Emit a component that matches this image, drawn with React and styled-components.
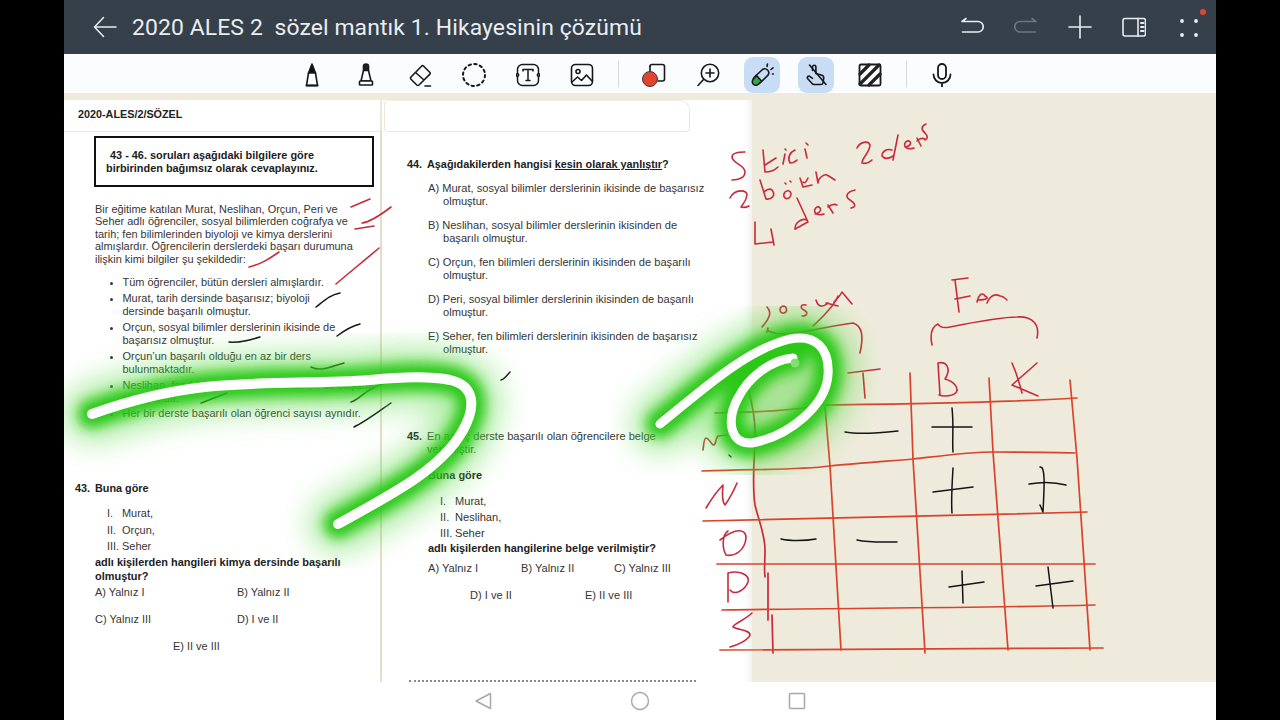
import React from "react";
import styled, { createGlobalStyle } from "styled-components";

const Global = createGlobalStyle`
  html, body { margin: 0; padding: 0; background: #000; }
  #root { width: 1280px; height: 720px; overflow: hidden; }
`;

const Screen = styled.div`
  width: 1152px; height: 720px; margin: 0 auto; display: flex; flex-direction: column;
  background: #fff; font-family: "Liberation Sans", Arial, sans-serif;
`;
const Header = styled.header`
  height: 54px; flex: none; background: #36404a; display: flex; align-items: center; padding: 0 16px 0 29px; position: relative;
`;
const Title = styled.h1`
  margin: 0 0 0 15px; flex: 1; font: 400 22.9px Roboto, sans-serif; color: #e9eef3; white-space: pre; letter-spacing: .12px;
`;
const HeadIcons = styled.div` display: flex; gap: 30px; `;
const HeadDot = styled.span`
  position: absolute; left: 1136px; top: 9px; width: 6px; height: 6px; border-radius: 50%; background: #e2452f;
`;
const Toolbar = styled.nav`
  height: 40px; flex: none; background: #fbfcfe; display: flex; align-items: center; padding-left: 230px; gap: 18px;
  border-bottom: 1px solid #ecebe4; box-sizing: border-box;
`;
const Tool = styled.span`
  width: 36px; height: 36px; flex: none; display: flex; align-items: center; justify-content: center; border-radius: 9px; margin-top: 3px;
  background: ${p => (p.$on ? "#c9dcf5" : "transparent")};
`;
const Sep = styled.span` width: 1px; height: 26px; background: #d4d6d8; margin: 0 -1px 0 0; flex: none; `;
const Canvas = styled.main`
  flex: 1; background: #efebdc; position: relative; overflow: hidden; display: flex;
`;
const Page = styled.div`
  width: 688px; height: 100%; display: grid; grid-template-columns: 318px 370px; padding-top: 6px; box-sizing: border-box;
  color: #353535; font-size: 10.95px; line-height: 12.6px; white-space: nowrap;
  background: linear-gradient(#efebdc 6px, #fff 6px);
  box-shadow: inset -10px 0 8px -8px #ececec;
`;
const Col = styled.section`
  min-width: 0; position: relative;
  ${p => p.$left && "border-right: 2px solid #e6dccb;"}
  ${p => p.$right && "font-size: 11.1px;"}
`;
const Tab = styled.div`
  height: 32px; box-sizing: border-box; display: flex; align-items: center; padding: 0 0 2px 14px;
  background: #fff; border: 1px solid #eee7d8; border-top: none; border-left: none;
  font-weight: 700; color: #222; font-size: 10.8px; border-radius: 10px 0 4px 0;
  ${p => p.$right && "margin: 0 62px 0 2px; border-left: 1px solid #eee7d8; border-top: 1px solid #f3eee2; border-radius: 4px 10px 4px 4px;"}
  ${p => p.$left && "margin-right: -2px; border-right: 2px solid #eee7d8; position: relative; z-index: 1;"}
`;
const NoticeBox = styled.div`
  margin: 4px 0 0 30px; width: 280px; height: 51px; box-sizing: border-box; border: 2px solid #111; padding: 11px 0 0 10px;
  font-weight: 700; color: #1c1c1c; font-size: 10.9px; line-height: 13px;
  span { display: block; }
  span:first-child { padding-left: 4px; }
`;
const Para = styled.p` margin: 16px 0 0 31px; line-height: 12.45px; `;
const Bullets = styled.ul`
  margin: 11px 0 0 0; padding: 0 0 0 58.5px; display: flex; flex-direction: column; gap: 3px; line-height: 12.9px;
  li { padding: 0; }
`;
const QHead = styled.div`
  display: grid; grid-template-columns: 20px auto; justify-content: start; font-weight: 700; color: #222; font-size: 10.85px;
  margin: ${p => p.$mt}px 0 0 ${p => p.$ml}px; line-height: 13px;
  u { text-decoration: underline; }
`;
const QBody = styled.span` font-weight: 400; color: #353535; font-size: 11.1px; `;
const Roman = styled.ol`
  list-style: none; margin: ${p => p.$mt}px 0 0 ${p => p.$ml}px; padding: 0; display: flex; flex-direction: column; gap: 3.6px;
  li { display: grid; grid-template-columns: 15px auto; }
`;
const Ask = styled.div`
  margin: ${p => p.$mt ?? 4}px 0 0 ${p => p.$ml}px; font-weight: 700; color: #222; line-height: 13.6px; font-size: 10.95px;
`;
const Answers = styled.div`
  display: grid; grid-template-columns: repeat(${p => p.$cols}, ${p => p.$step}px); row-gap: ${p => p.$gap}px;
  margin: ${p => p.$mt}px 0 0 ${p => p.$ml}px;
`;
const CentreAnswer = styled.span` grid-column: 1 / -1; padding-left: ${p => p.$pl}px; display: flex; gap: ${p => p.$gap || 0}px; `;
const Options = styled.div`
  margin: 11px 0 0 46px; display: flex; flex-direction: column; gap: 11.9px; line-height: 12.6px;
`;
const Option = styled.div` padding-left: 15px; text-indent: -15px; `;
const CutLine = styled.div`
  position: absolute; left: 27px; right: 56px; bottom: 0; height: 0; border-top: 2px dotted #8a8a8a;
`;
const Ink = styled.svg`
  position: absolute; inset: 0; width: 100%; height: 100%; pointer-events: none;
`;
const BottomNav = styled.footer`
  height: 38px; flex: none; background: #fff; display: grid; grid-template-columns: 157px 157px 157px; justify-content: center; justify-items: center; align-items: center;
`;

const Ic = ({ c = "#16181a", w = 24, h = 24, sw = 1.7, children }) => (
  <svg width={w} height={h} viewBox={`0 0 ${w} ${h}`} fill="none" stroke={c} strokeWidth={sw} strokeLinecap="round" strokeLinejoin="round">{children}</svg>
);

const HW = "#e8edf2";
const Back = () => <Ic c={HW} sw={1.5}><path d="M23 12H1.500M10.500 2.500 1.500 12l9 9.500" /></Ic>;
const Undo = () => <Ic c={HW} sw={1.6}><path d="M2 6.500h16a4.500 4.500 0 0 1 0 10.500H2.500M2 6.500 6 3.500" /></Ic>;
const Redo = () => <Ic c="#6e767e" sw={1.6}><path d="M22 6.500H6a4.500 4.500 0 0 0 0 10.500h15.500M22 6.500 18 3.500" /></Ic>;
const Plus = () => <Ic c={HW} sw={1.6}><path d="M12 1v22M1 12h22" /></Ic>;
const Panel = () => <Ic c={HW} sw={1.6}><rect x="1" y="3.500" width="22.500" height="17.500" rx="2" /><path d="M16 3.500V21" /><path d="M19 8h2.500M19 12h2.500M19 16h2.500" strokeWidth="2" /></Ic>;
const Dots = () => <Ic c={HW} sw={0}><g fill={HW}><circle cx="6" cy="6" r="1.900" /><circle cx="20" cy="6" r="1.900" /><circle cx="6" cy="20" r="1.900" /><circle cx="20" cy="20" r="1.900" /></g></Ic>;

const Pen = () => <Ic sw={1.6}><path d="M12 1 8.500 10h7Z" fill="#111" /><path d="M8.500 10 6.500 22.500h11L15.500 10Z" fill="#fff" /><path d="M6.500 22.500h11" strokeWidth="2" /></Ic>;
const Marker = () => <Ic sw={1.6}><path d="M9.500 7.500V3.500a2.500 2.500 0 0 1 5 0v4Z" fill="#222" /><path d="M9.500 7.500 7 18h10L14.500 7.500Z" fill="#fff" /><rect x="5.500" y="18" width="13" height="4" rx=".8" fill="#fff" /></Ic>;
const Eraser = () => <Ic sw={1.6}><path d="M3 14 13.500 3.200a1.600 1.600 0 0 1 2.200 0l6 6a1.600 1.600 0 0 1 0 2.200L11 22a1.600 1.600 0 0 1-2.200 0l-5.800-5.800a1.600 1.600 0 0 1 0-2.200ZM7.500 9.500l8.500 7.500" /><path d="M17 23h5.500" /></Ic>;
const Lasso = () => <Ic sw={2}><circle cx="12" cy="12" r="11" strokeDasharray="2.400 3.350" /></Ic>;
const TextTool = () => <Ic sw={1.5}><rect x="1.500" y="1.500" width="21" height="21" rx="5" /><path d="M7 8V6.500h10V8M12 6.500v11M10 17.500h4" /><circle cx="1.500" cy="12" r="1.200" fill="#fff" /><circle cx="22.500" cy="12" r="1.200" fill="#fff" /></Ic>;
const ImageTool = () => <Ic sw={1.6}><rect x="1.500" y="1.500" width="21" height="21" rx="4" /><circle cx="8" cy="8.500" r="2" /><path d="M2 19l5.500-5 4 3.500 5-5.500 5.500 6" /></Ic>;
const Shapes = () => <Ic sw={1.6}><path d="M8 3.500a2 2 0 0 1 2-2h10.500a2 2 0 0 1 2 2V16a2 2 0 0 1-2 2H16" /><path d="M8 3.500V8" /><circle cx="8" cy="16" r="7.500" fill="#e2452f" stroke="#3a3a3a" strokeWidth="1" /></Ic>;
const Zoom = () => <Ic sw={1.6}><circle cx="14" cy="10" r="8.700" /><path d="M14 6v8M10 10h8M7.500 16.500 2 22.500" /></Ic>;
const Laser = () => <Ic sw={1.6}>
  <path d="M4.500 14 12.500 6.500a4 4 0 0 1 5.500 5.600L10 20a3.900 3.900 0 0 1-5.500-6Z" fill="#c9dcf5" />
  <path d="M3.200 16.300 6.300 12.400l5.200 5.600-3.200 3.200a3.400 3.400 0 0 1-5-4.900Z" fill="#2fa84a" />
  <path d="M17 3.500 17.500 1M21 6.500 23 4.800M22.500 11h.8" />
</Ic>;
const Hand = () => <Ic sw={1.6}><path d="M5.500 2 22 21.500" /><path d="M8.500 7.500V4a1.700 1.700 0 0 1 3.400 0v6.500l6 1.800c1.300.4 2 1.600 1.800 3l-.7 4.500c-.2 1-1 1.700-2 1.700H10c-.8 0-1.400-.3-1.900-1L3.500 15.500c-.9-1.300.7-3 2.100-2.200l2.900 2" /></Ic>;
const Hatch = () => <Ic sw={1.8}><rect x="1.500" y="1.500" width="21" height="21" rx="1.500" fill="#fff" /><path d="M2 11 11 2M2 21 21 2M11 22 22 11" strokeWidth="3.200" stroke="#222" /></Ic>;
const Mic = () => <Ic sw={1.8}><rect x="8" y="1" width="8" height="15" rx="4" /><path d="M3.500 11.500a8.500 8.500 0 0 0 17 0M12 20v4" /></Ic>;

const WHITE1 = "M92 414 C120 404 160 392 205 387 C260 381 320 384 370 380 C400 377 430 376 450 380 C476 386 476 408 462 432 C440 470 390 495 338 524";
const WHITE2 = "M660 424 C700 392 745 350 790 339 C815 334 830 348 828 375 C826 405 790 436 752 443 C730 445 726 420 738 398 C748 378 770 360 793 358";

const RED = "#c92a3a";
const ORANGE = "#d9432b";
const BLACK = "#141414";

const grid = [
  "M715 413 C760 412 790 411 823 405 C900 404 1000 403 1077 398",
  "M702 471 C760 469 800 470 830 466 C860 463 890 461 913 459 C940 456 970 452 993 452 C1020 452 1050 452 1075 453",
  "M703 521 C800 518 950 516 1087 512",
  "M717 564 C850 564 980 564 1095 564",
  "M722 610 C850 608 980 608 1095 605",
  "M720 650 C850 649 980 649 1103 648",
  "M825 407 L830 466 L841 650",
  "M910 373 L913 459 L925 653",
  "M989 378 L993 452 L1008 650",
  "M1070 380 L1077 458 L1090 650",
];
const gridRed = [
  "M748 387 C752 405 756 420 755 440 C754 465 752 485 755 505 C760 525 765 535 765 550 C765 560 764 570 765 577",
  "M768 573 L768 620",
  "M772 615 L773 653",
];
const redNotes = [
  "M351 207 L370 199", "M362 223 C370 222 378 217 391 207", "M355 229 L374 226",
  "M249 267 C262 264 270 258 279 252", "M336 284 C350 272 365 260 379 248",
  // 5 kişi
  "M745 152 C738 152 732 153 732 157 C732 163 745 165 745 172 C745 178 738 180 732 180",
  "M763 150 L765 172 C770 172 775 170 778 167 M776 158 L765 165",
  "M785 154 L783 164", "M795 150 C790 152 787 158 790 163 C792 163 795 162 797 160", "M805 149 L807 158 M806 143 L808 145 M785 149 L786 150",
  // 2 bölüm
  "M730 198 C735 188 748 190 747 195 C746 202 742 205 741 207 C744 208 747 207 749 206",
  "M760 180 L766 199 C772 200 776 195 772 190 C770 188 766 190 764 192",
  "M785 192 C782 196 785 200 789 198 C793 194 790 188 785 192 M785 183 L786 184 M790 181 L791 182",
  "M800 178 L803 187 L812 185",
  "M803 182 C805 184 806 182 808 178 M816 172 L818 183 C818 178 824 174 827 175 C829 176 832 178 835 180",
  // 4 ders
  "M755 222 L755 244 L773 242 M771 229 L774 245",
  "M797 198 L808 222 C800 226 794 230 795 229 C795 222 802 218 807 220",
  "M815 214 C822 213 822 206 817 207 C812 210 815 217 824 214",
  "M828 205 L833 213 M828 207 C832 204 835 204 837 205",
  "M855 190 C846 192 845 197 850 200 C855 203 857 207 851 208",
  // 2 ders
  "M857 148 C860 142 868 140 870 145 C870 152 862 158 862 163 C866 164 870 162 872 160",
  "M898 135 L893 160 M892 150 C886 148 882 152 882 156 C885 160 890 158 893 156",
  "M905 147 C912 146 912 140 907 141 C902 144 905 151 914 148",
  "M917 138 L921 146 M917 141 C920 138 923 138 925 139",
  "M926 124 C921 126 921 130 925 133 C928 136 928 139 925 140",
  // sosyal
  "M767 307 C772 312 770 318 762 327",
  "M783 306 C778 308 780 314 784 313 C788 312 787 306 783 306",
  "M806 305 C800 304 800 308 804 310 C808 312 808 316 802 316",
  "M816 300 C818 307 822 308 828 303 M838 296 C835 304 826 314 813 326",
  "M834 302 C838 298 840 296 842 292 L852 304 M826 303 L838 306",
  "M767 332 C768 328 768 326 768 331 C780 336 790 334 800 332 C815 330 830 326 853 323 C862 326 864 335 860 353",
  // Fen
  "M955 280 L959 312", "M952 280 L968 278", "M955 299 L970 296",
  "M977 302 C978 296 982 291 985 296 C990 298 986 300 978 300", "M987 303 C990 296 995 293 1000 296 C1003 296 1005 298 1007 300",
  "M932 345 C930 335 931 327 938 324 C940 328 945 328 950 327 C975 322 1000 317 1017 317 C1033 316 1040 325 1037 338",
  // T B K
  "M848 373 L880 369", "M863 373 L865 398",
  "M938 363 L940 395 M938 363 C946 361 952 368 945 379 C956 382 962 392 952 395 C948 396 942 396 939 395",
  "M1037 363 L1012 385 L1038 396 M1012 363 C1016 372 1020 385 1022 393",
  // Row letters
  "M703 450 C704 443 704 438 706 438 C709 438 712 446 714 445 C716 444 716 437 718 436 L727 435",
  "M706 508 C712 498 718 490 723 485 C722 495 722 502 725 505 C730 498 734 490 737 483",
  "M728 531 C722 535 722 548 726 555 C735 557 745 550 746 538 C746 530 738 526 720 540",
  "M728 602 L728 573 C740 570 750 575 748 582 C745 590 735 596 730 590",
  "M752 613 C745 620 733 624 733 627 C738 630 750 630 750 635 C748 640 738 645 730 647",
];
const blackNotes = [
  "M316 307 C325 300 330 295 340 293", "M337 336 C345 330 352 326 360 324", "M229 342 C240 343 250 340 260 337",
  "M311 367 C320 372 330 367 344 363", "M351 402 C360 400 365 388 386 383", "M201 403 L227 393",
  "M354 427 C365 422 378 412 391 403", "M501 380 C505 379 507 375 510 372",
  "M845 432 C860 435 880 433 898 431", "M932 427 L972 427", "M952 408 C954 425 952 440 953 452",
  "M933 492 L973 487", "M953 468 C952 485 951 500 952 513",
  "M1029 484 C1040 482 1055 482 1066 485", "M1040 467 C1046 466 1044 490 1043 512 M1043 512 L1040 505",
  "M781 539 C790 541 805 541 816 539", "M857 540 C870 543 885 542 897 542",
  "M949 587 L984 582", "M962 571 L963 603",
  "M1036 586 L1073 581", "M1048 567 L1053 608",
  "M729 455 L731 457",
];

const InkLayer = () => (
  <Ink viewBox="64 94 1152 588" fill="none" strokeLinecap="round" strokeLinejoin="round">
    <defs>
      <filter id="g1" x="-30%" y="-30%" width="160%" height="160%"><feGaussianBlur stdDeviation="15" /></filter>
      <filter id="g2" x="-30%" y="-30%" width="160%" height="160%"><feGaussianBlur stdDeviation="6" /></filter>
    </defs>
    {gridRed.map(d => <path key={d} d={d} stroke={RED} strokeWidth="1.700" />)}
    {redNotes.map(d => <path key={d} d={d} stroke={RED} strokeWidth="1.600" />)}
    {grid.map(d => <path key={d} d={d} stroke={ORANGE} strokeWidth="1.700" />)}
    {blackNotes.map(d => <path key={d} d={d} stroke={BLACK} strokeWidth="1.500" />)}
    {[WHITE1, WHITE2].map(d => (
      <g key={d}>
        <path d={d} stroke="#53d83c" strokeWidth="56" opacity=".5" filter="url(#g1)" />
        <path d={d} stroke="#22c60d" strokeWidth="28" opacity=".92" filter="url(#g2)" />
      </g>
    ))}
    <path d={WHITE1} stroke="#fff" strokeWidth="10" />
    <path d={WHITE2} stroke="#fff" strokeWidth="9" />
    <circle cx="795" cy="363" r="4.500" fill="#7fe06a" />
  </Ink>
);

export default function App() {
  return (
    <Screen>
      <Global />
      <Header>
        <Back />
        <Title>2020 ALES 2  sözel mantık 1. Hikayesinin çözümü</Title>
        <HeadIcons><Undo /><Redo /><Plus /><Panel /><Dots /></HeadIcons>
        <HeadDot />
      </Header>
      <Toolbar>
        <Tool><Pen /></Tool><Tool><Marker /></Tool><Tool><Eraser /></Tool><Tool><Lasso /></Tool><Tool><TextTool /></Tool><Tool><ImageTool /></Tool>
        <Sep />
        <Tool><Shapes /></Tool><Tool><Zoom /></Tool><Tool $on><Laser /></Tool><Tool $on><Hand /></Tool><Tool><Hatch /></Tool>
        <Sep />
        <Tool><Mic /></Tool>
      </Toolbar>
      <Canvas>
        <Page>
          <Col $left>
            <Tab $left>2020-ALES/2/SÖZEL</Tab>
            <NoticeBox><span>43 - 46. soruları aşağıdaki bilgilere göre</span><span>birbirinden bağımsız olarak cevaplayınız.</span></NoticeBox>
            <Para>Bir eğitime katılan Murat, Neslihan, Orçun, Peri ve<br />Seher adlı öğrenciler, sosyal bilimlerden coğrafya ve<br />tarih; fen bilimlerinden biyoloji ve kimya derslerini<br />almışlardır. Öğrencilerin derslerdeki başarı durumuna<br />ilişkin kimi bilgiler şu şekildedir:</Para>
            <Bullets>
              <li>Tüm öğrenciler, bütün dersleri almışlardır.</li>
              <li>Murat, tarih dersinde başarısız; biyoloji<br />dersinde başarılı olmuştur.</li>
              <li>Orçun, sosyal bilimler derslerinin ikisinde de<br />başarısız olmuştur.</li>
              <li>Orçun’un başarılı olduğu en az bir ders<br />bulunmaktadır.</li>
              <li>Neslihan, fen bilimleri derslerinin ikisinde de başarılı<br />olmuşlardır.</li>
              <li>Her bir derste başarılı olan öğrenci sayısı aynıdır.</li>
            </Bullets>
            <QHead $mt={62} $ml={11}><span>43.</span><span>Buna göre</span></QHead>
            <Roman $mt={12} $ml={43}><li><span>I.</span><span>Murat,</span></li><li><span>II.</span><span>Orçun,</span></li><li><span>III.</span><span>Seher</span></li></Roman>
            <Ask $ml={31}>adlı kişilerden hangileri kimya dersinde başarılı<br />olmuştur?</Ask>
            <Answers $cols={2} $step={142} $gap={14.400} $mt={3} $ml={31}>
              <span>A) Yalnız I</span><span>B) Yalnız II</span>
              <span>C) Yalnız III</span><span>D) I ve II</span>
              <CentreAnswer $pl={78}>E) II ve III</CentreAnswer>
            </Answers>
          </Col>
          <Col $right>
            <Tab $right />
            <QHead $mt={26} $ml={25}><span>44.</span><span>Aşağıdakilerden hangisi <u>kesin olarak yanlıştır</u>?</span></QHead>
            <Options>
              <Option>A) Murat, sosyal bilimler derslerinin ikisinde de başarısız<br />olmuştur.</Option>
              <Option>B) Neslihan, sosyal bilimler derslerinin ikisinden de<br />başarılı olmuştur.</Option>
              <Option>C) Orçun, fen bilimleri derslerinin ikisinden de başarılı<br />olmuştur.</Option>
              <Option>D) Peri, sosyal bilimler derslerinin ikisinden de başarılı<br />olmuştur.</Option>
              <Option>E) Seher, fen bilimleri derslerinin ikisinden de başarısız<br />olmuştur.</Option>
            </Options>
            <QHead $mt={74} $ml={25}><span>45.</span><QBody>En az üç derste başarılı olan öğrencilere belge<br />verilmiştir.</QBody></QHead>
            <Ask $ml={46} $mt={13}>Buna göre</Ask>
            <Roman $mt={13} $ml={58}><li><span>I.</span><span>Murat,</span></li><li><span>II.</span><span>Neslihan,</span></li><li><span>III.</span><span>Seher</span></li></Roman>
            <Ask $ml={46} $mt={2}>adlı kişilerden hangilerine belge verilmiştir?</Ask>
            <Answers $cols={3} $step={93} $gap={14.400} $mt={6} $ml={46}>
              <span>A) Yalnız I</span><span>B) Yalnız II</span><span>C) Yalnız III</span>
              <CentreAnswer $pl={42} $gap={73}><span>D) I ve II</span><span>E) II ve III</span></CentreAnswer>
            </Answers>
            <CutLine />
          </Col>
        </Page>
        <InkLayer />
      </Canvas>
      <BottomNav>
        <svg width="18" height="18" viewBox="0 0 18 18" fill="none" stroke="#a9a9a9" strokeWidth="1.500"><path d="M16.500 1.500v15L2 9Z" strokeLinejoin="round" /></svg>
        <svg width="20" height="20" viewBox="0 0 20 20" fill="none" stroke="#a9a9a9" strokeWidth="1.500"><circle cx="10" cy="10" r="8.500" /></svg>
        <svg width="18" height="18" viewBox="0 0 18 18" fill="none" stroke="#a9a9a9" strokeWidth="1.500"><rect x="1.500" y="1.500" width="15" height="15" rx="1" /></svg>
      </BottomNav>
    </Screen>
  );
}
